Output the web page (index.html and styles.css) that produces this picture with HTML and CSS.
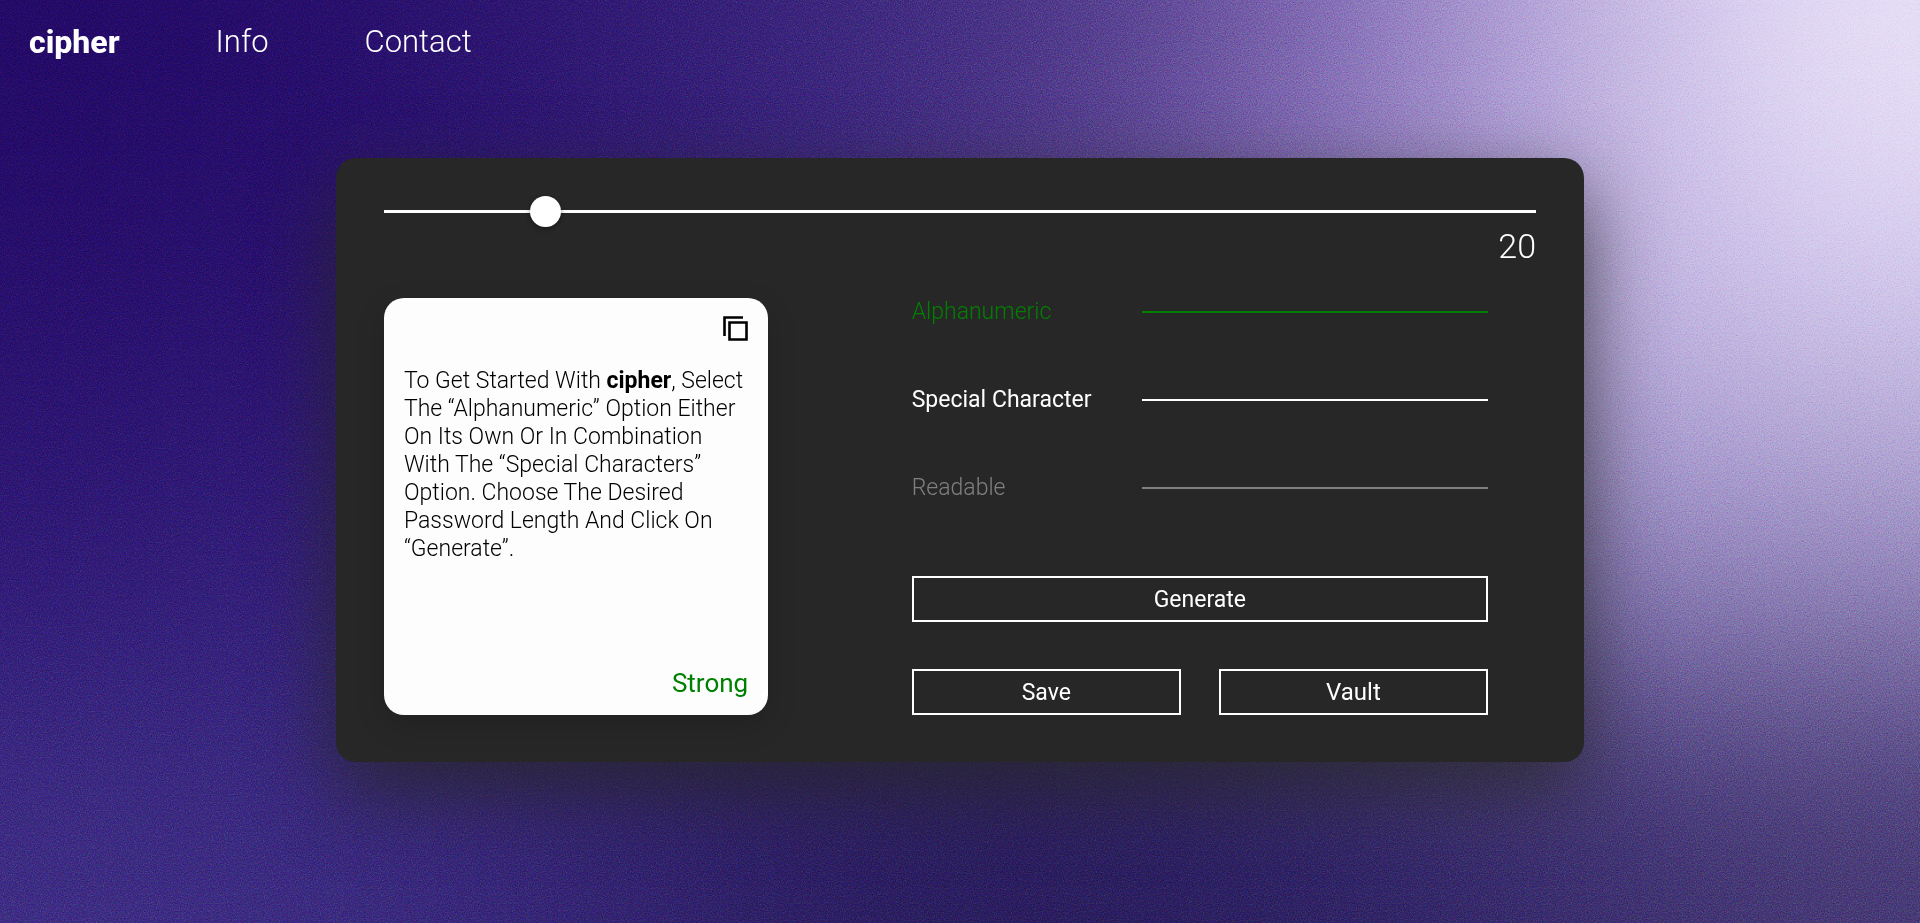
FILE: index.html
```html
<!DOCTYPE html>
<html lang="en">
<head>
<meta charset="utf-8">
<meta name="viewport" content="width=device-width, initial-scale=1">
<title>cipher</title>
<link rel="stylesheet" href="styles.css">
</head>
<body>
<svg class="backdrop" viewBox="0 0 8 4" preserveAspectRatio="none" aria-hidden="true">
  <defs>
    <filter id="soften" x="-1" y="-1" width="10" height="6" filterUnits="userSpaceOnUse" color-interpolation-filters="sRGB">
      <feGaussianBlur stdDeviation="0.5"/>
    </filter>
  </defs>
  <g filter="url(#soften)">
    <rect x="-3" y="-3" width="14" height="10" fill="#2a1572"/>
    <rect x="-3" y="-3" width="4.1" height="4.1" fill="#200965"/><rect x="1" y="-3" width="1.1" height="4.1" fill="#240d6a"/><rect x="2" y="-3" width="1.1" height="4.1" fill="#2c1671"/><rect x="3" y="-3" width="1.1" height="4.1" fill="#38237c"/><rect x="4" y="-3" width="1.1" height="4.1" fill="#4c3587"/><rect x="5" y="-3" width="1.1" height="4.1" fill="#8068b4"/><rect x="6" y="-3" width="1.1" height="4.1" fill="#bbacdd"/><rect x="7" y="-3" width="4" height="4.1" fill="#e6def7"/>
    <rect x="-3" y="1" width="4.1" height="1.1" fill="#260f6c"/><rect x="1" y="1" width="1.1" height="1.1" fill="#27116f"/><rect x="2" y="1" width="1.1" height="1.1" fill="#2c1674"/><rect x="3" y="1" width="1.1" height="1.1" fill="#38237c"/><rect x="4" y="1" width="1.1" height="1.1" fill="#554090"/><rect x="5" y="1" width="1.1" height="1.1" fill="#8c78bb"/><rect x="6" y="1" width="1.1" height="1.1" fill="#b5a6da"/><rect x="7" y="1" width="4" height="1.1" fill="#cbc0e8"/>
    <rect x="-3" y="2" width="4.1" height="1.1" fill="#2c1775"/><rect x="1" y="2" width="1.1" height="1.1" fill="#321e7a"/><rect x="2" y="2" width="1.1" height="1.1" fill="#301c74"/><rect x="3" y="2" width="1.1" height="1.1" fill="#312070"/><rect x="4" y="2" width="1.1" height="1.1" fill="#3d2d78"/><rect x="5" y="2" width="1.1" height="1.1" fill="#5c4c90"/><rect x="6" y="2" width="1.1" height="1.1" fill="#8a7cb8"/><rect x="7" y="2" width="4" height="1.1" fill="#9486bd"/>
    <rect x="-3" y="3" width="4.1" height="4" fill="#3a2982"/><rect x="1" y="3" width="1.1" height="4" fill="#37277e"/><rect x="2" y="3" width="1.1" height="4" fill="#302070"/><rect x="3" y="3" width="1.1" height="4" fill="#281b5e"/><rect x="4" y="3" width="1.1" height="4" fill="#261a5b"/><rect x="5" y="3" width="1.1" height="4" fill="#291d60"/><rect x="6" y="3" width="1.1" height="4" fill="#35286b"/><rect x="7" y="3" width="4" height="4" fill="#433573"/>
  </g>
</svg>
<svg class="backdrop grain" aria-hidden="true">
  <filter id="noise" x="0" y="0" width="100%" height="100%" color-interpolation-filters="sRGB">
    <feTurbulence type="fractalNoise" baseFrequency="0.87" numOctaves="3" seed="4"/>
    <feColorMatrix values="1.6 0 0 0 -0.25  0 1.6 0 0 -0.25  0 0 1.6 0 -0.25  0 0 0 0 1"/>
  </filter>
  <rect width="100%" height="100%" filter="url(#noise)"/>
</svg>

<nav class="nav">
  <a class="nav-link brand" href="#">cipher</a>
  <a class="nav-link" href="#info">Info</a>
  <a class="nav-link" href="#contact">Contact</a>
</nav>

<main class="panel">
  <div class="length">
    <input class="slider" id="length" type="range" min="8" max="100" value="20" aria-label="Password length">
    <output class="length-value" for="length">20</output>
  </div>
  <div class="columns">
    <section class="note">
      <button class="copy" type="button" aria-label="Copy password">
        <svg class="copy-icon" viewBox="0 0 25 25" aria-hidden="true">
          <path d="M1.5 20V1.500H20M6.500 6.500H23.500V23.500H6.500Z" fill="none" stroke="#000" stroke-width="2.600"/>
        </svg>
      </button>
      <p class="note-text">To Get Started With <strong>cipher</strong>, Select The “Alphanumeric” Option Either On Its Own Or In Combination With The “Special Characters” Option. Choose The Desired Password Length And Click On “Generate”.</p>
      <p class="strength">Strong</p>
    </section>
    <section class="controls">
      <div class="options">
        <button class="option option-on" type="button" aria-pressed="true"><span>Alphanumeric</span><span class="option-line"></span></button>
        <button class="option option-ready" type="button" aria-pressed="false"><span>Special Character</span><span class="option-line"></span></button>
        <button class="option option-off" type="button" aria-pressed="false"><span>Readable</span><span class="option-line"></span></button>
      </div>
      <button class="button" type="button">Generate</button>
      <div class="pair">
        <button class="button" type="button">Save</button>
        <button class="button button-vault" type="button">Vault</button>
      </div>
    </section>
  </div>
</main>
</body>
</html>
```

FILE: styles.css
```css
* {
  box-sizing: border-box;
}

body {
  margin: 0;
  min-height: 100vh;
  background: #2a1572;
  color: #fff;
  font-family: Roboto, "Liberation Sans", sans-serif;
  font-weight: 300;
}

button {
  margin: 0;
  padding: 0;
  border: 0;
  background: none;
  color: inherit;
  font: inherit;
  cursor: pointer;
}

.backdrop {
  position: fixed;
  inset: 0;
  z-index: -1;
  width: 100%;
  height: 100%;
}

.grain {
  mix-blend-mode: soft-light;
  opacity: 0.5;
}

.nav {
  display: flex;
  gap: 96px;
  padding: 24px 29px;
}

.nav-link {
  color: #fff;
  font-size: 31px;
  line-height: 36px;
  text-decoration: none;
}

.brand {
  font-size: 32px;
  font-weight: 800;
}

.panel {
  width: 65%;
  margin: 74px auto 48px;
  padding: 38px 48px 47px;
  border-radius: 20px;
  background: #272727;
  box-shadow: 0 30px 80px rgba(39, 39, 39, 0.8);
}

.length {
  display: flex;
  flex-direction: column;
  align-items: flex-end;
}

.slider {
  width: 100%;
  height: 30px;
  margin: 0;
  appearance: none;
  background: none;
}

.slider::-webkit-slider-runnable-track {
  height: 3px;
  background: #fdfdfd;
}

.slider::-webkit-slider-thumb {
  width: 31px;
  height: 31px;
  margin-top: -14px;
  appearance: none;
  border-radius: 50%;
  background: #fff;
  box-shadow: 0 2px 5px rgba(0, 0, 0, 0.4);
}

.length-value {
  font-size: 34px;
  line-height: 40px;
}

.columns {
  display: grid;
  grid-template-columns: 2fr 3fr;
  column-gap: 13%;
  margin-top: 32px;
  padding-right: 48px;
}

.note {
  display: flex;
  flex-direction: column;
  padding: 18px 20px;
  border-radius: 20px;
  background: #fdfdfd;
  color: #000;
  box-shadow: 0 10px 30px rgba(0, 0, 0, 0.15);
}

.copy {
  align-self: flex-end;
  width: 25px;
  height: 25px;
}

.copy-icon {
  display: block;
  width: 100%;
  height: 100%;
}

.note-text {
  margin: 26px 0 0;
  font-size: 23px;
  line-height: 28px;
}

.note-text strong {
  font-weight: 700;
}

.strength {
  margin: auto 0 0;
  color: green;
  font-size: 26px;
  font-weight: 400;
  line-height: 28px;
  text-align: right;
}

.options {
  display: grid;
  gap: 60px;
}

.option {
  display: grid;
  grid-template-columns: 2fr 3fr;
  align-items: center;
  font-size: 23px;
  line-height: 28px;
  text-align: left;
  white-space: nowrap;
}

.option-line {
  height: 2px;
  background: currentColor;
}

.option-on {
  color: green;
}

.option-ready {
  font-weight: 400;
}

.option-off {
  color: gray;
}

.button {
  width: 100%;
  height: 46px;
  border: 2px solid #fff;
  font-size: 23px;
  font-weight: 400;
}

.button-vault {
  font-size: 24px;
}

.options + .button {
  margin-top: 74px;
}

.pair {
  display: grid;
  grid-template-columns: 1fr 1fr;
  gap: 38px;
  margin-top: 47px;
}
```
